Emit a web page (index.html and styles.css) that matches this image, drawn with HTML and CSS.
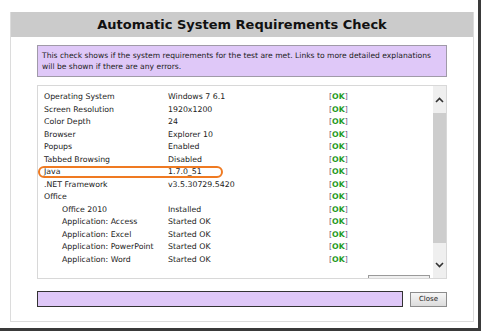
FILE: index.html
```html
<!DOCTYPE html>
<html>
<head>
<meta charset="utf-8">
<link rel="stylesheet" href="styles.css">
</head>
<body>
<div class="shadow">
  <div class="dialog">
    <div class="header">Automatic System Requirements Check</div>
    <div class="content">
      <div class="info">This check shows if the system requirements for the test are met. Links to more detailed explanations will be shown if there are any errors.</div>
      <div class="listbox">
        <div class="rows">
          <div class="row"><span class="lab">Operating System</span><span class="val">Windows 7 6.1</span><span class="ok">[<b>OK</b>]</span></div>
          <div class="row"><span class="lab">Screen Resolution</span><span class="val">1920x1200</span><span class="ok">[<b>OK</b>]</span></div>
          <div class="row"><span class="lab">Color Depth</span><span class="val">24</span><span class="ok">[<b>OK</b>]</span></div>
          <div class="row"><span class="lab">Browser</span><span class="val">Explorer 10</span><span class="ok">[<b>OK</b>]</span></div>
          <div class="row"><span class="lab">Popups</span><span class="val">Enabled</span><span class="ok">[<b>OK</b>]</span></div>
          <div class="row"><span class="lab">Tabbed Browsing</span><span class="val">Disabled</span><span class="ok">[<b>OK</b>]</span></div>
          <div class="row"><span class="lab">Java</span><span class="val">1.7.0_51</span><span class="ok">[<b>OK</b>]</span></div>
          <div class="row"><span class="lab">.NET Framework</span><span class="val">v3.5.30729.5420</span><span class="ok">[<b>OK</b>]</span></div>
          <div class="row"><span class="lab">Office</span><span class="val"></span><span class="ok">[<b>OK</b>]</span></div>
          <div class="row"><span class="lab sub">Office 2010</span><span class="val">Installed</span><span class="ok">[<b>OK</b>]</span></div>
          <div class="row"><span class="lab sub">Application: Access</span><span class="val">Started OK</span><span class="ok">[<b>OK</b>]</span></div>
          <div class="row"><span class="lab sub">Application: Excel</span><span class="val">Started OK</span><span class="ok">[<b>OK</b>]</span></div>
          <div class="row"><span class="lab sub">Application: PowerPoint</span><span class="val">Started OK</span><span class="ok">[<b>OK</b>]</span></div>
          <div class="row"><span class="lab sub">Application: Word</span><span class="val">Started OK</span><span class="ok">[<b>OK</b>]</span></div>
          <div class="cutbtn"></div>
        </div>
        <div class="scrollbar">
          <div class="arrow"><svg width="9" height="6" viewBox="0 0 9 6"><path d="M1 5 L4.5 1.5 L8 5" fill="none" stroke="#333" stroke-width="1.6"/></svg></div>
          <div class="track"><div class="thumb"></div></div>
          <div class="arrow"><svg width="9" height="6" viewBox="0 0 9 6"><path d="M1 1 L4.5 4.5 L8 1" fill="none" stroke="#333" stroke-width="1.6"/></svg></div>
        </div>
        <div class="mark"></div>
      </div>
      <div class="footer">
        <div class="status"></div>
        <div class="close">Close</div>
      </div>
    </div>
  </div>
</div>
</body>
</html>
```
FILE: styles.css
```css
html, body {
  margin: 0;
  padding: 0;
  background: #fff;
}
body {
  width: 484px;
  height: 332px;
  overflow: hidden;
  font-family: "DejaVu Sans", Verdana, sans-serif;
}
.shadow {
  width: 481px;
  height: 331px;
  padding: 12px 4px 0 10px;
  box-sizing: border-box;
  border-right: 3px solid #3a3a3a;
  border-bottom: 3px solid #3a3a3a;
}
.dialog {
  width: 464px;
  height: 310px;
  box-sizing: border-box;
  border-left: 1px solid #dcdcdc;
  border-right: 1px solid #dcdcdc;
  border-bottom: 1px solid #dcdcdc;
  background: #fff;
}
.header {
  height: 25px;
  background: #cbcbcb;
  font-weight: bold;
  font-size: 13px;
  line-height: 26px;
  text-align: center;
  color: #111;
}
.content {
  padding: 8px 26px 0 26px;
}
.info {
  height: 32px;
  box-sizing: border-box;
  background: #dfc8f8;
  border: 1px solid #a09aa8;
  font-size: 7.6px;
  line-height: 11px;
  padding: 4px 4px 0 4px;
  color: #222;
}
.listbox {
  position: relative;
  margin-top: 8px;
  height: 194px;
  box-sizing: border-box;
  border: 1px solid #d8d8d8;
  display: flex;
}
.rows {
  flex: 1;
  padding: 5px 0 0 6px;
  overflow: hidden;
  font-size: 7.8px;
  color: #222;
}
.row {
  display: flex;
  height: 12.5px;
  line-height: 12.5px;
  white-space: nowrap;
}
.lab {
  width: 124px;
}
.lab.sub {
  padding-left: 18px;
  width: 106px;
}
.val {
  width: 161px;
}
.ok {
  color: #6f5a84;
}
.ok b {
  color: #1e9a1e;
  font-weight: bold;
}
.cutbtn {
  margin: 9px 0 0 324px;
  width: 60px;
  height: 10px;
  border: 1px solid #9a9a9a;
  background: #f0f0f0;
}
.scrollbar {
  width: 13px;
  background: #efefef;
  display: flex;
  flex-direction: column;
}
.arrow {
  height: 27px;
  display: flex;
  align-items: center;
  justify-content: center;
}
.track {
  flex: 1;
}
.thumb {
  height: 130px;
  background: #cdcdcd;
}
.mark {
  position: absolute;
  left: 0;
  top: 80px;
  width: 185px;
  height: 12px;
  box-sizing: border-box;
  border: 2px solid #ef7a22;
  border-radius: 7px;
}
.footer {
  margin-top: 12px;
  display: flex;
  align-items: flex-start;
}
.status {
  width: 366px;
  height: 16px;
  box-sizing: border-box;
  background: #dfc8f8;
  border: 1px solid #333;
}
.close {
  margin-left: 7px;
  margin-top: 1px;
  width: 37px;
  height: 15px;
  box-sizing: border-box;
  border: 1px solid #8c8c8c;
  background: linear-gradient(#f6f6f6, #dcdcdc);
  font-size: 7px;
  line-height: 13px;
  text-align: center;
  color: #222;
}
```
